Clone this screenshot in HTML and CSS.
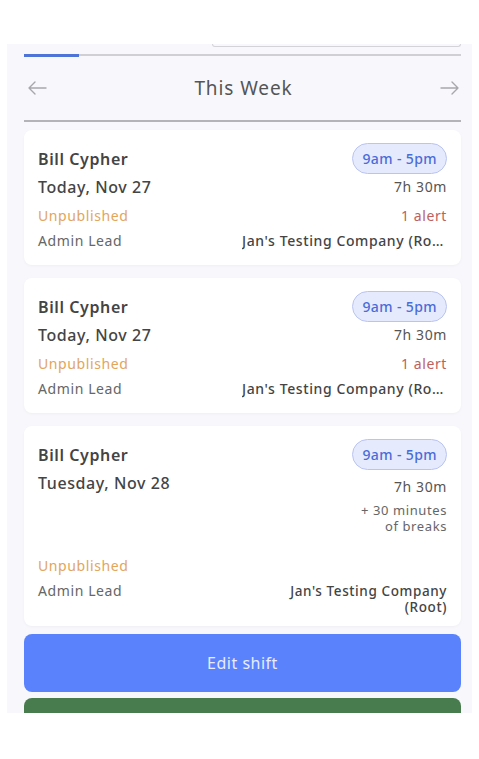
FILE: index.html
```html
<!DOCTYPE html>
<html lang="en">
<head>
    <meta charset="UTF-8" />
    <title>Shifts - This Week</title>
    <link rel="stylesheet" href="styles.css">
</head>
<body>

<div class="panel">
    <div class="search-edge"></div>
    <div class="tabs">
        <div class="tab-active"></div>
    </div>

    <div class="week-nav">
        <svg class="arrow" width="20" height="14" viewBox="0 0 20 14">
            <path d="M19 7H2M8 1L2 7l6 6" fill="none" stroke="#a8a8ac" stroke-width="1.4" stroke-linecap="round" stroke-linejoin="round"/>
        </svg>
        <span class="week-title">This Week</span>
        <svg class="arrow" width="20" height="14" viewBox="0 0 20 14">
            <path d="M1 7h17M12 1l6 6-6 6" fill="none" stroke="#a8a8ac" stroke-width="1.4" stroke-linecap="round" stroke-linejoin="round"/>
        </svg>
    </div>

    <div class="shift-card">
        <div class="row row-top">
            <span class="name">Bill Cypher</span>
            <span class="time-pill">9am - 5pm</span>
        </div>
        <div class="row row-date">
            <span class="date">Today, Nov 27</span>
            <span class="duration">7h 30m</span>
        </div>
        <div class="row row-status">
            <span class="status">Unpublished</span>
            <span class="alert">1 alert</span>
        </div>
        <div class="row row-role">
            <span class="role">Admin Lead</span>
            <span class="company truncate">Jan's Testing Company (Root)</span>
        </div>
    </div>

    <div class="shift-card">
        <div class="row row-top">
            <span class="name">Bill Cypher</span>
            <span class="time-pill">9am - 5pm</span>
        </div>
        <div class="row row-date">
            <span class="date">Today, Nov 27</span>
            <span class="duration">7h 30m</span>
        </div>
        <div class="row row-status">
            <span class="status">Unpublished</span>
            <span class="alert">1 alert</span>
        </div>
        <div class="row row-role">
            <span class="role">Admin Lead</span>
            <span class="company truncate">Jan's Testing Company (Root)</span>
        </div>
    </div>

    <div class="shift-card shift-card-last">
        <div class="row row-top">
            <span class="name">Bill Cypher</span>
            <span class="time-pill">9am - 5pm</span>
        </div>
        <div class="row row-date">
            <span class="date">Tuesday, Nov 28</span>
            <div class="duration-block">
                <div class="duration">7h 30m</div>
                <div class="breaks">+ 30 minutes<br>of breaks</div>
            </div>
        </div>
        <div class="row row-status row-status-spaced">
            <span class="status">Unpublished</span>
        </div>
        <div class="row row-role">
            <span class="role">Admin Lead</span>
            <span class="company wrap">Jan's Testing Company<br>(Root)</span>
        </div>
    </div>

    <button class="btn btn-edit">Edit shift</button>
    <button class="btn btn-green"></button>
</div>

</body>
</html>
```

FILE: styles.css
```css
body {
  margin: 0;
  background-color: #ffffff;
  font-family: "Noto Sans", sans-serif;
  color: #444;
}

.panel {
  margin: 44px 0 0 7px;
  width: 465px;
  height: 669px;
  box-sizing: border-box;
  padding: 0 11px 0 17px;
  background-color: #f8f8fc;
  overflow: hidden;
}

.search-edge {
  margin-left: 188px;
  height: 2px;
  border: 1px solid #d4d4d8;
  border-top: none;
  border-radius: 0 0 6px 6px;
}

.tabs {
  margin-top: 8px;
  height: 2px;
  background-color: #cfcfd4;
}

.tab-active {
  width: 55px;
  height: 3px;
  margin-top: -1px;
  background-color: #4f74d8;
}

.week-nav {
  display: flex;
  justify-content: space-between;
  align-items: center;
  height: 64px;
  padding: 0 1px 0 3px;
  border-bottom: 2px solid #b4b4b8;
}

.arrow {
  display: block;
}

.week-title {
  font-size: 19px;
  color: #555;
  letter-spacing: 0.9px;
}

.shift-card {
  margin-top: 8px;
  background-color: #ffffff;
  border-radius: 8px;
  box-shadow: 0 1px 3px rgba(0,0,0,0.04);
  padding: 13px 14px 14px 14px;
  letter-spacing: 0.6px;
}

.shift-card + .shift-card {
  margin-top: 13px;
}

.shift-card-last {
  padding-bottom: 11px;
}

.row {
  display: flex;
  justify-content: space-between;
  align-items: center;
  line-height: 20px;
}

.row-top {
  height: 31px;
}

.row-date {
  margin-top: 3px;
  align-items: flex-start;
}

.row-status {
  margin-top: 9px;
}

.row-status-spaced {
  margin-top: 22px;
}

.row-role {
  margin-top: 5px;
  align-items: flex-start;
}

.name {
  font-size: 16px;
  font-weight: 600;
  color: #444;
}

.date {
  font-size: 16px;
  font-weight: 500;
  color: #444;
}

.time-pill {
  height: 29px;
  line-height: 29px;
  padding: 0 9px;
  border: 1px solid #b9c4f2;
  border-radius: 16px;
  background-color: #e6eafd;
  color: #4a6bd8;
  font-size: 14px;
  font-weight: 500;
  letter-spacing: 0.4px;
}

.duration {
  font-size: 14px;
  color: #555;
  text-align: right;
}

.duration-block .duration {
  margin-top: 4px;
}

.breaks {
  margin-top: 5px;
  font-size: 13px;
  line-height: 16px;
  color: #666;
  text-align: right;
}

.status {
  font-size: 14px;
  color: #e2a55c;
}

.alert {
  font-size: 14px;
  color: #c0605c;
}

.role {
  font-size: 14px;
  color: #666;
}

.company {
  font-size: 14px;
  font-weight: 500;
  color: #444;
  text-align: right;
}

.truncate {
  max-width: 205px;
  white-space: nowrap;
  overflow: hidden;
  text-overflow: ellipsis;
}

.wrap {
  font-size: 13.5px;
  line-height: 16px;
  margin-top: 2px;
}

.btn {
  display: block;
  width: 100%;
  border: none;
  border-radius: 8px;
  font-family: "Noto Sans", sans-serif;
  font-size: 16px;
  letter-spacing: 0.5px;
  cursor: pointer;
}

.btn-edit {
  margin-top: 8px;
  height: 58px;
  background-color: #5a82fc;
  color: #e8ecff;
}

.btn-edit:hover {
  background-color: #4a72ec;
}

.btn-green {
  margin-top: 6px;
  height: 50px;
  background-color: #487c4e;
}
```
